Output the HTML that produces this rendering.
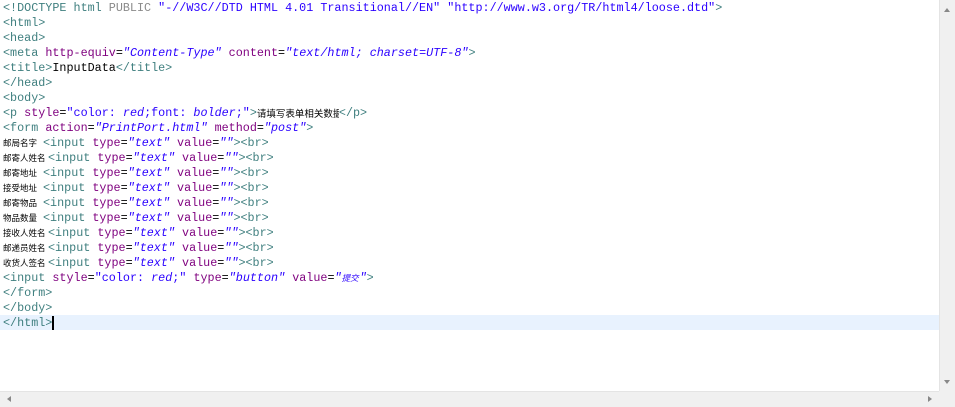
<!DOCTYPE html>
<html><head><meta charset="utf-8">
<style>
html,body{margin:0;padding:0;width:955px;height:407px;overflow:hidden;background:#fff;position:relative}
#code{position:absolute;left:3px;top:1px;font-family:"Liberation Mono",monospace;font-size:11.75px;line-height:15px;white-space:pre;color:#000}
.l{height:15px}
.t{color:#3f7f7f}.a{color:#7f007f}.v{color:#2a00ff;font-style:italic}.g{color:#8a8a8a}.s{color:#2a00ff}
.c{font-family:"Noto Sans CJK SC","WenQuanYi Zen Hei",sans-serif;font-size:8.5px;display:inline-block;overflow:hidden;vertical-align:top;letter-spacing:0;color:#000}
#hl{position:absolute;left:0;top:315px;width:939px;height:15px;background:#e8f2fe}
#vs{position:absolute;left:939px;top:0;width:16px;height:391px;background:#f0f0f0;border-left:1px solid #e4e4e4;box-sizing:border-box}
#hs{position:absolute;left:0;top:391px;width:939px;height:16px;background:#f0f0f0;border-top:1px solid #e4e4e4;box-sizing:border-box}
#corner{position:absolute;left:939px;top:391px;width:16px;height:16px;background:#f0f0f0}
.ar{position:absolute;width:0;height:0}
#cur{display:inline-block;width:2px;height:14px;background:#000;vertical-align:top;margin-top:0}
</style></head><body>
<div id="hl"></div>
<div id="code"><div class="l"><span class="t">&lt;!DOCTYPE html </span><span class="g">PUBLIC</span> <span class="s">"-//W3C//DTD HTML 4.01 Transitional//EN"</span> <span class="s">"http://www.w3.org/TR/html4/loose.dtd"</span><span class="t">&gt;</span></div><div class="l"><span class="t">&lt;html&gt;</span></div><div class="l"><span class="t">&lt;head&gt;</span></div><div class="l"><span class="t">&lt;meta </span><span class="a">http-equiv</span>=<span class="v">"Content-Type"</span> <span class="a">content</span>=<span class="v">"text/html; charset=UTF-8"</span><span class="t">&gt;</span></div><div class="l"><span class="t">&lt;title&gt;</span>InputData<span class="t">&lt;/title&gt;</span></div><div class="l"><span class="t">&lt;/head&gt;</span></div><div class="l"><span class="t">&lt;body&gt;</span></div><div class="l"><span class="t">&lt;p </span><span class="a">style</span>=<span class="s">"color: <i>red</i>;font: <i>bolder</i>;"</span><span class="t">&gt;</span><span class="c" style="width:82px;font-size:9.5px">请填写表单相关数据</span><span class="t">&lt;/p&gt;</span></div><div class="l"><span class="t">&lt;form </span><span class="a">action</span>=<span class="v">"PrintPort.html"</span> <span class="a">method</span>=<span class="v">"post"</span><span class="t">&gt;</span></div><div class="l"><span class="c" style="width:40px">邮局名字</span><span class="t">&lt;input </span><span class="a">type</span>=<span class="v">"text"</span> <span class="a">value</span>=<span class="v">""</span><span class="t">&gt;&lt;br&gt;</span></div><div class="l"><span class="c" style="width:45px">邮寄人姓名</span><span class="t">&lt;input </span><span class="a">type</span>=<span class="v">"text"</span> <span class="a">value</span>=<span class="v">""</span><span class="t">&gt;&lt;br&gt;</span></div><div class="l"><span class="c" style="width:40px">邮寄地址</span><span class="t">&lt;input </span><span class="a">type</span>=<span class="v">"text"</span> <span class="a">value</span>=<span class="v">""</span><span class="t">&gt;&lt;br&gt;</span></div><div class="l"><span class="c" style="width:40px">接受地址</span><span class="t">&lt;input </span><span class="a">type</span>=<span class="v">"text"</span> <span class="a">value</span>=<span class="v">""</span><span class="t">&gt;&lt;br&gt;</span></div><div class="l"><span class="c" style="width:40px">邮寄物品</span><span class="t">&lt;input </span><span class="a">type</span>=<span class="v">"text"</span> <span class="a">value</span>=<span class="v">""</span><span class="t">&gt;&lt;br&gt;</span></div><div class="l"><span class="c" style="width:40px">物品数量</span><span class="t">&lt;input </span><span class="a">type</span>=<span class="v">"text"</span> <span class="a">value</span>=<span class="v">""</span><span class="t">&gt;&lt;br&gt;</span></div><div class="l"><span class="c" style="width:45px">接收人姓名</span><span class="t">&lt;input </span><span class="a">type</span>=<span class="v">"text"</span> <span class="a">value</span>=<span class="v">""</span><span class="t">&gt;&lt;br&gt;</span></div><div class="l"><span class="c" style="width:45px">邮递员姓名</span><span class="t">&lt;input </span><span class="a">type</span>=<span class="v">"text"</span> <span class="a">value</span>=<span class="v">""</span><span class="t">&gt;&lt;br&gt;</span></div><div class="l"><span class="c" style="width:45px">收货人签名</span><span class="t">&lt;input </span><span class="a">type</span>=<span class="v">"text"</span> <span class="a">value</span>=<span class="v">""</span><span class="t">&gt;&lt;br&gt;</span></div><div class="l"><span class="t">&lt;input </span><span class="a">style</span>=<span class="s">"color: <i>red</i>;"</span> <span class="a">type</span>=<span class="v">"button"</span> <span class="a">value</span>=<span class="v">"<span class="c" style="width:18px;color:#2a00ff">提交</span>"</span><span class="t">&gt;</span></div><div class="l"><span class="t">&lt;/form&gt;</span></div><div class="l"><span class="t">&lt;/body&gt;</span></div><div class="l"><span class="t">&lt;/html&gt;</span><span id="cur"></span></div></div>
<div id="vs"></div>
<div id="hs"></div>
<div id="corner"></div>
<div class="ar" style="left:944px;top:8px;border-left:3px solid transparent;border-right:3px solid transparent;border-bottom:4px solid #888"></div>
<div class="ar" style="left:944px;top:380px;border-left:3px solid transparent;border-right:3px solid transparent;border-top:4px solid #888"></div>
<div class="ar" style="left:7px;top:396px;border-top:3px solid transparent;border-bottom:3px solid transparent;border-right:4px solid #888"></div>
<div class="ar" style="left:928px;top:396px;border-top:3px solid transparent;border-bottom:3px solid transparent;border-left:4px solid #888"></div>
</body></html>
